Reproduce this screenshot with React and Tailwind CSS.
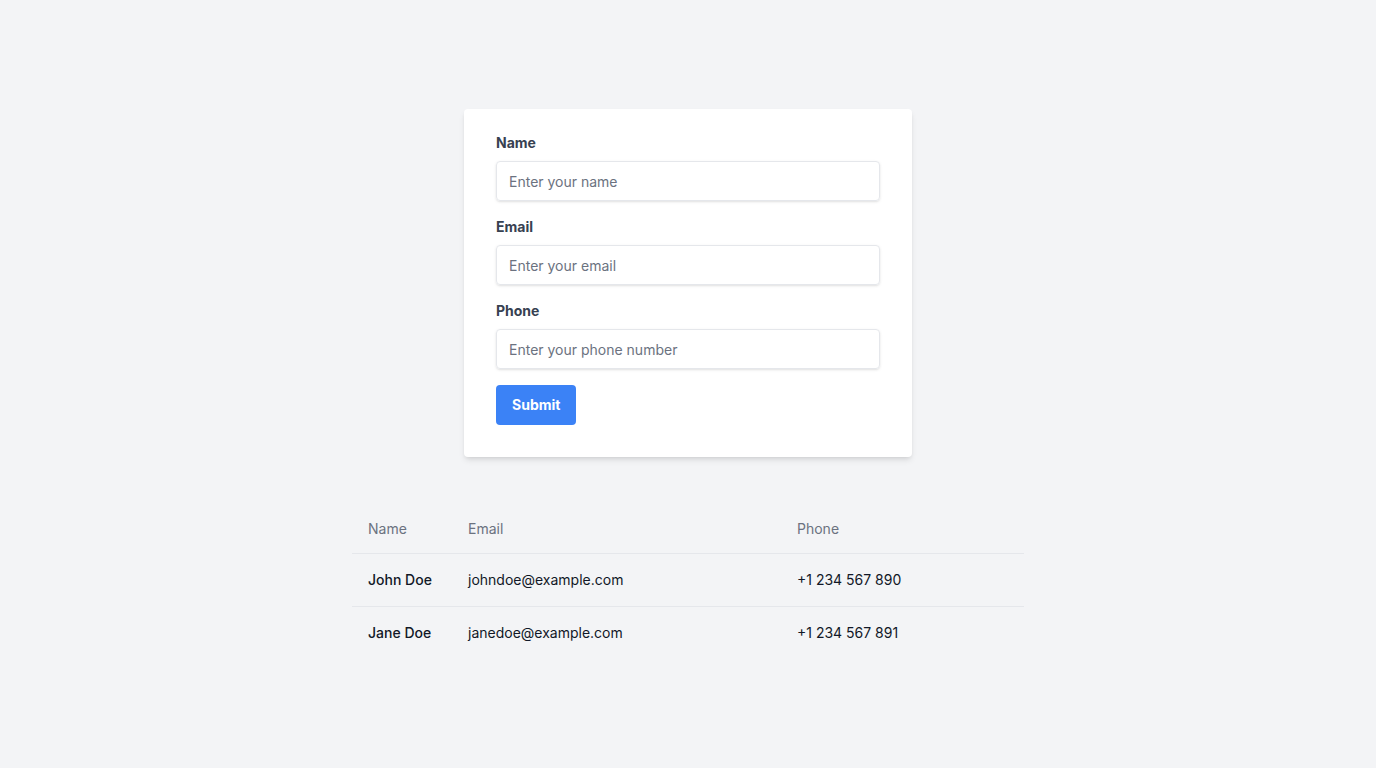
export default function App() {
  const rows = [
    { name: "John Doe", email: "johndoe@example.com", phone: "+1 234 567 890" },
    { name: "Jane Doe", email: "janedoe@example.com", phone: "+1 234 567 891" },
  ];
  const fields = [
    { label: "Name", ph: "Enter your name", type: "text" },
    { label: "Email", ph: "Enter your email", type: "email" },
    { label: "Phone", ph: "Enter your phone number", type: "tel" },
  ];
  return (
    <div className="min-h-screen bg-[#f3f4f6] pt-[109px] font-['Inter',sans-serif]">
      <div className="mx-auto w-[448px] rounded bg-white px-8 pt-6 pb-8 shadow-md">
        {fields.map((f) => (
          <div key={f.label} className="mb-4">
            <label className="mb-2 block text-sm font-bold text-[#374151]">{f.label}</label>
            <input
              type={f.type}
              placeholder={f.ph}
              className="h-10 w-full appearance-none rounded border border-[#e5e7eb] px-3 text-sm text-[#374151] shadow placeholder:text-[#6b7280] focus:outline-none"
            />
          </div>
        ))}
        <button className="h-10 rounded bg-[#3b82f6] px-4 text-sm font-bold text-white">Submit</button>
      </div>
      <div className="mx-auto mt-12 w-[672px]">
        <table className="w-full table-fixed text-left text-sm">
          <thead>
            <tr className="border-b border-[#e5e7eb]">
              <th className="w-[100px] px-4 pt-[14px] pb-[14px] font-normal text-[#6b7280]">Name</th>
              <th className="w-[329px] px-4 pt-[14px] pb-[14px] font-normal text-[#6b7280]">Email</th>
              <th className="px-4 pt-[14px] pb-[14px] font-normal text-[#6b7280]">Phone</th>
            </tr>
          </thead>
          <tbody>
            {rows.map((r, i) => (
              <tr key={r.name} className={i === 0 ? "border-b border-[#e5e7eb]" : ""}>
                <td className="px-4 py-4 font-medium text-[#111827]">{r.name}</td>
                <td className="px-4 py-4 text-[#111827]">{r.email}</td>
                <td className="px-4 py-4 text-[#111827]">{r.phone}</td>
              </tr>
            ))}
          </tbody>
        </table>
      </div>
    </div>
  );
}
